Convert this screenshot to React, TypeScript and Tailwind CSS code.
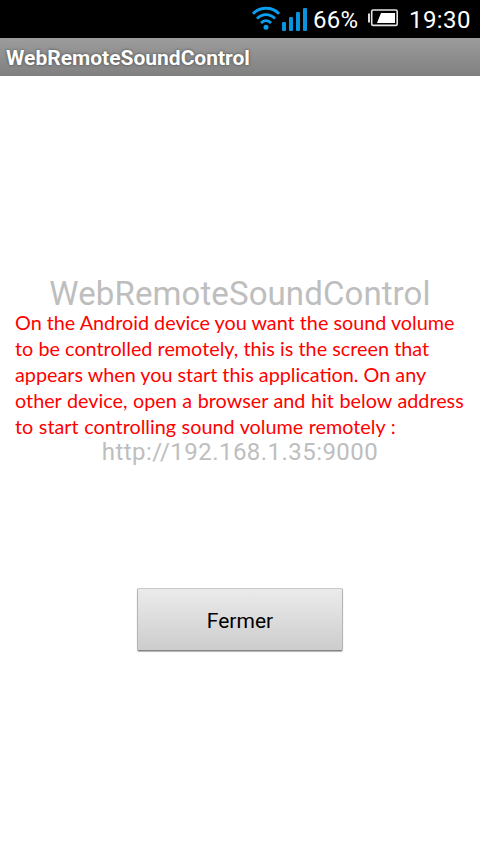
const lines = [
  { text: "On the Android device you want the sound volume", cls: "[word-spacing:0px]" },
  { text: "to be controlled remotely, this is the screen that", cls: "[word-spacing:0.1px]" },
  { text: "appears when you start this application. On any", cls: "[word-spacing:0px]" },
  { text: "other device, open a browser and hit below address", cls: "[word-spacing:0.5px]" },
  { text: "to start controlling sound volume remotely :", cls: "[word-spacing:0.5px]" },
];

function WifiIcon() {
  return (
    <svg className="h-[26px] w-[30px]" viewBox="0 0 30 26" fill="none" stroke="#0a9ff0" strokeWidth="2.8">
      <path d="M1.9 9.8C9 2.4 21 2.4 28.1 9.8" />
      <path d="M6 14.6C11 9.2 19 9.2 24 14.6" />
      <path d="M10 19C12.9 15.9 17.1 15.9 20 19" />
      <circle cx="15" cy="23.2" r="2.5" fill="#0a9ff0" stroke="none" />
    </svg>
  );
}

function SignalIcon() {
  return (
    <div className="flex h-[23px] items-end gap-[3px]">
      <div className="h-[9px] w-[4px] rounded-[1px] bg-[#0a93dc]" />
      <div className="h-[14px] w-[4px] rounded-[1px] bg-[#0a93dc]" />
      <div className="h-[19px] w-[4px] rounded-[1px] bg-[#0a93dc]" />
      <div className="h-[23px] w-[4px] rounded-[1px] bg-[#0a93dc]" />
    </div>
  );
}

function BatteryIcon() {
  return (
    <svg className="h-[18px] w-[31px]" viewBox="0 0 31 18" fill="none">
      <rect x="0" y="4.5" width="2" height="9" fill="#ddd" />
      <rect x="3.7" y="1" width="25.5" height="15.4" rx="1.5" stroke="#e4e4e4" strokeWidth="1.6" />
      <path d="M13 4H27V14H9Z" fill="#fff" />
    </svg>
  );
}

export default function App() {
  return (
    <div className="flex h-[854px] w-[480px] flex-col overflow-hidden bg-white font-['Roboto',sans-serif]">
      <header className="flex h-[38px] shrink-0 items-start bg-black text-[24px] leading-[40px] text-white">
        <div className="ml-[251px] mt-[4px]"><WifiIcon /></div>
        <div className="ml-[1px] mt-[8px]"><SignalIcon /></div>
        <span className="ml-[6px] w-[55px] whitespace-nowrap tracking-[0.3px]">66%</span>
        <div className="mt-[9px]"><BatteryIcon /></div>
        <span className="ml-[10px] whitespace-nowrap tracking-[0.4px]">19:30</span>
      </header>
      <div className="h-[38px] shrink-0 bg-linear-to-b from-[#9c9c9c] to-[#808080] pl-[6px] text-[21px] leading-[40px] font-bold text-white [text-shadow:0_0_3px_rgba(0,0,0,0.55)]">
        <span className="whitespace-nowrap">WebRemoteSoundControl</span>
      </div>
      <main className="flex flex-col pt-[198px]">
        <h1 className="text-center text-[33px] leading-[40px] tracking-[0.1px] text-[#bebebe]">WebRemoteSoundControl</h1>
        <p className="mt-[-5px] pl-[15px] font-['Lato',sans-serif] text-[19.8px] leading-[26px] text-[#f00]">
          {lines.map((l) => (
            <span key={l.text} className={`block whitespace-nowrap ${l.cls}`}>{l.text}</span>
          ))}
        </p>
        <p className="mt-[-2px] text-center text-[24px] leading-[30px] tracking-[0.45px] text-[#bebebe]">http://192.168.1.35:9000</p>
        <button className="mx-auto mt-[121px] h-[63px] w-[206px] rounded-[2px] border border-t-[#c8c8c8] border-r-[#b4b4b4] border-b-[#858585] border-l-[#b4b4b4] bg-linear-to-b from-[#ebebeb] to-[#cdcdcd] pt-[5px] text-[21px] text-black shadow-[0_1px_1px_rgba(0,0,0,0.3)]">
          Fermer
        </button>
      </main>
    </div>
  );
}
